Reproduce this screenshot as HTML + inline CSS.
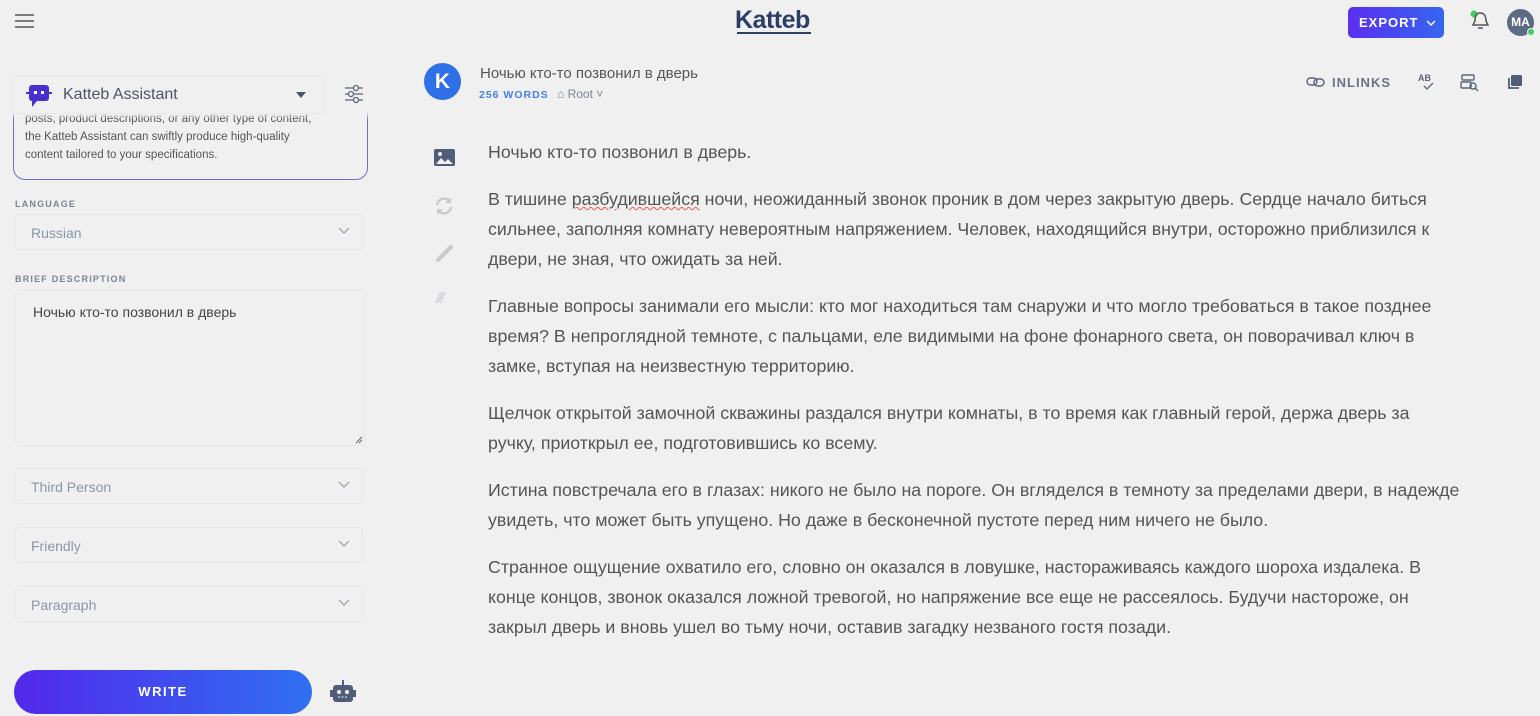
<!DOCTYPE html>
<html><head><meta charset="utf-8"><style>
*{box-sizing:border-box;margin:0;padding:0}
body{width:1540px;height:716px;background:#f0f0f0;font-family:"Liberation Sans",sans-serif;color:#555;position:relative;overflow:hidden}
.abs{position:absolute}
.sel{position:absolute;left:15px;width:348px;height:36px;border:1px solid #e8e8e8;border-radius:4px;font-size:14px;color:#8a96ad;padding:10px 0 0 15px}
.sel svg{position:absolute;right:12px;top:12px}
.lbl{position:absolute;left:15px;font-size:9px;letter-spacing:1.2px;color:#7a8497;font-weight:bold}
.txt p{font-size:17.8px;line-height:30px;color:#555;margin-bottom:17px}
</style></head><body>
<svg class="abs" style="left:15px;top:13px" width="20" height="16"><path d="M0 2h19M0 8h19M0 14h19" stroke="#555" stroke-width="1.6"/></svg>
<div class="abs" style="left:735px;top:6px;font-size:25px;font-weight:bold;color:#2c3e66;letter-spacing:-0.5px">Katteb</div>
<div class="abs" style="left:737px;top:32px;width:74px;height:2px;background:#2c3e66"></div>
<div class="abs" style="left:1348px;top:7px;width:96px;height:31px;border-radius:5px;background:linear-gradient(90deg,#5a2ff0,#3566f0);color:#fff;font-size:13px;font-weight:bold;letter-spacing:1px;padding:8px 0 0 11px">EXPORT <svg width="10" height="7" style="margin-left:3px"><path d="M1 1l4 4 4-4" stroke="#fff" fill="none" stroke-width="1.4"/></svg></div>
<svg class="abs" style="left:1468px;top:9px" width="26" height="24"><circle cx="6" cy="5" r="3.5" fill="#3ccf5e"/><path d="M12 4c-4 0-5 4-5 8l-2 4h15l-2-4c0-4-1-8-6-8zM10 19h5" stroke="#555" fill="none" stroke-width="1.5"/></svg>
<div class="abs" style="left:1507px;top:9px;width:27px;height:27px;border-radius:50%;background:#5c6a85;color:#fff;font-size:12px;font-weight:bold;text-align:center;line-height:27px">MA</div>
<div class="abs" style="left:1527px;top:28px;width:8px;height:8px;border-radius:50%;background:#3ccf5e;border:1px solid #f0f0f0"></div>

<div class="abs" style="left:13px;top:110px;width:355px;height:70px;border:1px solid #6d6fd0;border-top:none;border-radius:0 0 12px 12px;overflow:hidden">
<div style="font-size:11.5px;line-height:18px;color:#555;padding:4px 0 0 11px;margin-top:-4px">posts, product descriptions, or any other type of content,<br>the Katteb Assistant can swiftly produce high-quality<br>content tailored to your specifications.</div></div>
<div class="abs" style="left:11px;top:100px;width:357px;height:18px;background:linear-gradient(#f0f0f0 60%,rgba(240,240,240,0.3))"></div>
<div class="abs" style="left:11px;top:76px;width:314px;height:38px;border:1px solid #e9e9e9;border-radius:4px;background:#f0f0f0"></div>
<svg class="abs" style="left:26px;top:84px" width="28" height="24"><rect x="3" y="1" width="20" height="16" rx="3" fill="#4a2fd0"/><path d="M6 17l0 6 5-6z" fill="#4a2fd0"/><rect x="8" y="7" width="3" height="3" fill="#fff"/><rect x="15" y="7" width="3" height="3" fill="#fff"/><path d="M0 9h3M23 9h3" stroke="#4a2fd0" stroke-width="2"/></svg>
<div class="abs" style="left:63px;top:86px;font-size:16px;color:#4e5468">Katteb Assistant</div>
<svg class="abs" style="left:296px;top:92px" width="10" height="6"><path d="M0 0h10L5 6z" fill="#4a5268"/></svg>
<svg class="abs" style="left:344px;top:84px" width="20" height="20"><g stroke="#5a6378" stroke-width="1.3" fill="none"><path d="M1 4h18M1 10h18M1 16h18"/><circle cx="12" cy="4" r="2.5" fill="#f0f0f0"/><circle cx="7" cy="10" r="2.5" fill="#f0f0f0"/><circle cx="12" cy="16" r="2.5" fill="#f0f0f0"/></g></svg>
<div class="lbl" style="top:199px">LANGUAGE</div>
<div class="sel" style="top:214px">Russian<svg width="12" height="8"><path d="M1 1l5 5 5-5" stroke="#99a" fill="none" stroke-width="1.2"/></svg></div>
<div class="lbl" style="top:274px">BRIEF DESCRIPTION</div>
<div class="abs" style="left:15px;top:290px;width:350px;height:156px;border:1px solid #e8e8e8;border-radius:4px;font-size:14px;color:#444;padding:13px 0 0 17px">Ночью кто-то позвонил в дверь</div>
<svg class="abs" style="left:355px;top:436px" width="8" height="8"><path d="M1 7L7 1M4 7L7 4" stroke="#666"/></svg>
<div class="sel" style="top:468px">Third Person<svg width="12" height="8"><path d="M1 1l5 5 5-5" stroke="#99a" fill="none" stroke-width="1.2"/></svg></div>
<div class="sel" style="top:527px">Friendly<svg width="12" height="8"><path d="M1 1l5 5 5-5" stroke="#99a" fill="none" stroke-width="1.2"/></svg></div>
<div class="sel" style="top:586px">Paragraph<svg width="12" height="8"><path d="M1 1l5 5 5-5" stroke="#99a" fill="none" stroke-width="1.2"/></svg></div>
<div class="abs" style="left:14px;top:670px;width:298px;height:44px;border-radius:22px;background:linear-gradient(90deg,#5228ec,#2f6ff0);color:#fff;font-size:13px;font-weight:bold;letter-spacing:1.5px;text-align:center;line-height:44px">WRITE</div>
<svg class="abs" style="left:329px;top:680px" width="28" height="24"><rect x="4" y="5" width="20" height="17" rx="3" fill="#4f5d78"/><rect x="1" y="10" width="3" height="7" fill="#4f5d78"/><rect x="24" y="10" width="3" height="7" fill="#4f5d78"/><rect x="13" y="0" width="2" height="5" fill="#4f5d78"/><circle cx="10" cy="12" r="2" fill="#f0f0f0"/><circle cx="18" cy="12" r="2" fill="#f0f0f0"/><path d="M9 17h10" stroke="#f0f0f0" stroke-dasharray="2 1.5"/></svg>

<div class="abs" style="left:424px;top:63px;width:37px;height:37px;border-radius:50%;background:#2f6fe8;color:#fff;font-weight:bold;font-size:21px;text-align:center;line-height:37px">K</div>
<div class="abs" style="left:480px;top:65px;font-size:15px;color:#555">Ночью кто-то позвонил в дверь</div>
<div class="abs" style="left:479px;top:89px;font-size:10.5px;font-weight:bold;letter-spacing:1px;color:#4a7ee8">256 WORDS</div>
<div class="abs" style="left:557px;top:87px;font-size:12px;color:#7a8497">⌂ Root ˅</div>
<svg class="abs" style="left:1306px;top:75px" width="20" height="14"><g stroke="#5a6378" fill="none" stroke-width="1.4"><rect x="1" y="3" width="10" height="7" rx="3.5"/><rect x="8" y="4" width="10" height="7" rx="3.5"/></g></svg>
<div class="abs" style="left:1332px;top:75px;font-size:13px;font-weight:bold;letter-spacing:1px;color:#6a7387">INLINKS</div>
<div class="abs" style="left:1418px;top:73px;font-size:9px;font-weight:bold;color:#5a6378">AB</div>
<svg class="abs" style="left:1422px;top:82px" width="14" height="9"><path d="M2 4l3 3 6-6" stroke="#5a6378" fill="none" stroke-width="1.3"/></svg>
<svg class="abs" style="left:1460px;top:74px" width="20" height="18"><g stroke="#5a6378" fill="none" stroke-width="1.4"><rect x="2" y="1" width="12" height="5" rx="1"/><rect x="1" y="8" width="10" height="6" rx="1"/><circle cx="13" cy="12" r="3"/><path d="M15 14l3 3"/></g></svg>
<svg class="abs" style="left:1506px;top:73px" width="18" height="18"><rect x="5" y="2" width="11" height="11" rx="1.5" fill="#4f5d78"/><path d="M3 5v10h10" stroke="#4f5d78" fill="none" stroke-width="1.8"/></svg>

<svg class="abs" style="left:434px;top:149px" width="21" height="17"><rect width="21" height="17" rx="2" fill="#4f5d78"/><path d="M2 15l5-6 4 4 3-3 5 5z" fill="#f0f0f0"/><circle cx="6" cy="5" r="2" fill="#f0f0f0"/></svg>
<svg class="abs" style="left:434px;top:196px" width="20" height="20"><g stroke="#c8cad0" stroke-width="2.4" fill="none"><path d="M3 9a7 7 0 0 1 13-3M17 11a7 7 0 0 1-13 3"/></g><path d="M17 1v6h-6z" fill="#c8cad0"/><path d="M3 19v-6h6z" fill="#c8cad0"/></svg>
<svg class="abs" style="left:435px;top:243px" width="20" height="20"><path d="M3 17L16 4" stroke="#c8cad0" stroke-width="4" stroke-linecap="round"/></svg>
<div class="abs" style="left:436px;top:290px;font-size:15px;color:#c8cad0;font-style:italic;letter-spacing:-2px">///</div>

<div class="abs txt" style="left:488px;top:137px;width:980px">
<p>Ночью кто-то позвонил в дверь.</p>
<p>В тишине <span style="text-decoration:underline wavy #e55;text-decoration-thickness:1px">разбудившейся</span> ночи, неожиданный звонок проник в дом через закрытую дверь. Сердце начало биться сильнее, заполняя комнату невероятным напряжением. Человек, находящийся внутри, осторожно приблизился к двери, не зная, что ожидать за ней.</p>
<p>Главные вопросы занимали его мысли: кто мог находиться там снаружи и что могло требоваться в такое позднее время? В непроглядной темноте, с пальцами, еле видимыми на фоне фонарного света, он поворачивал ключ в замке, вступая на неизвестную территорию.</p>
<p>Щелчок открытой замочной скважины раздался внутри комнаты, в то время как главный герой, держа дверь за<br>ручку, приоткрыл ее, подготовившись ко всему.</p>
<p>Истина повстречала его в глазах: никого не было на пороге. Он вгляделся в темноту за пределами двери, в надежде увидеть, что может быть упущено. Но даже в бесконечной пустоте перед ним ничего не было.</p>
<p>Странное ощущение охватило его, словно он оказался в ловушке, настораживаясь каждого шороха издалека. В конце концов, звонок оказался ложной тревогой, но напряжение все еще не рассеялось. Будучи настороже, он закрыл дверь и вновь ушел во тьму ночи, оставив загадку незваного гостя позади.</p>
</div>
</body></html>
